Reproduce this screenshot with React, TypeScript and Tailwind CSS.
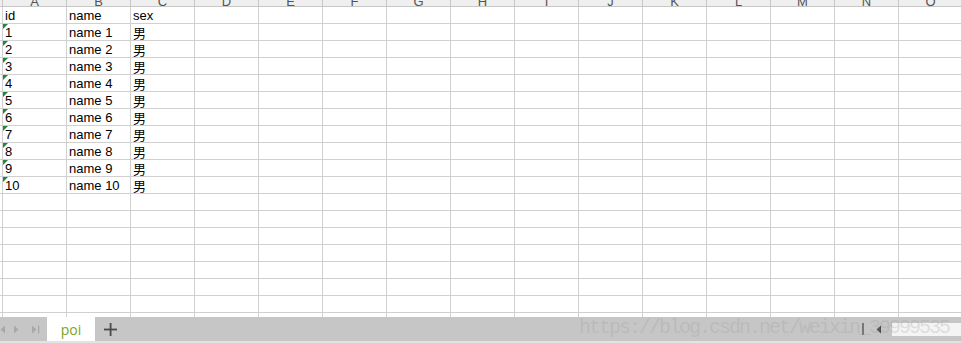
import React from "react";

const COLS = ["A", "B", "C", "D", "E", "F", "G", "H", "I", "J", "K", "L", "M", "N", "O"];

const DATA: string[][] = [
  ["id", "name", "sex"],
  ...Array.from({ length: 10 }, (_, i) => [String(i + 1), `name ${i + 1}`, "男"]),
];

const ROWS = 19;

function Cell({ text, flag, cjk }: { text?: string; flag?: boolean; cjk?: boolean }) {
  return (
    <div className="relative h-[17px] w-[64px] shrink-0 overflow-hidden border-b border-r border-[#d0d0d0] bg-white">
      {flag && (
        <span className="absolute left-0 top-0 h-0 w-0 border-r-[5px] border-t-[5px] border-r-transparent border-t-[#1d8a3a]" />
      )}
      {text && (
        <span
          className={`block pl-[2px] pt-[1px] text-[13px] leading-[15px] text-black ${
            cjk ? "font-['Noto_Sans_CJK_SC',sans-serif]" : ""
          }`}
        >
          {text}
        </span>
      )}
    </div>
  );
}

export default function App() {
  return (
    <div className="relative h-[343px] w-[961px] overflow-hidden bg-white font-['Liberation_Sans',Arial,sans-serif]">
      {/* Grid */}
      <div className="h-[317px] overflow-hidden">
        {/* Column headers (mostly scrolled out) */}
        <div className="flex">
          <div className="h-[7px] w-[3px] shrink-0 border-b border-r border-[#c8c8c8] bg-[#efefef]" />
          {COLS.map((c) => (
            <div
              key={c}
              className="flex h-[7px] w-[64px] shrink-0 items-end justify-center overflow-hidden border-b border-r border-[#c8c8c8] bg-[#efefef]"
            >
              <span className="translate-y-[2px] text-[13px] leading-none text-[#555]">{c}</span>
            </div>
          ))}
        </div>

        {Array.from({ length: ROWS }, (_, r) => (
          <div key={r} className="flex">
            <div className="h-[17px] w-[3px] shrink-0 border-b border-r border-[#d0d0d0] bg-white" />
            {COLS.map((c, ci) => {
              const row = DATA[r];
              const text = row && ci < 3 ? row[ci] : undefined;
              return (
                <Cell
                  key={c}
                  text={text}
                  flag={r > 0 && r < DATA.length && ci === 0}
                  cjk={ci === 2 && r > 0}
                />
              );
            })}
          </div>
        ))}
      </div>

      {/* Sheet tab bar */}
      <div className="flex h-[26px] items-stretch border-b-2 border-[#e3e3e3] bg-[#c6c6c6]">
        <div className="flex w-[47px] items-center gap-[7px]">
          <svg width="6" height="9" viewBox="0 0 6 9">
            <path d="M5 0.5 L0.5 4.5 L5 8.5 Z" fill="#a8a8a8" />
          </svg>
          <svg width="6" height="9" viewBox="0 0 6 9">
            <path d="M1 0.5 L5.5 4.5 L1 8.5 Z" fill="#a8a8a8" />
          </svg>
          <svg width="9" height="9" viewBox="0 0 9 9" className="ml-[5px]">
            <path d="M1 0.5 L5.5 4.5 L1 8.5 Z" fill="#a8a8a8" />
            <rect x="7" y="0.5" width="1.3" height="8" fill="#a8a8a8" />
          </svg>
        </div>
        <div className="flex w-[48px] items-center justify-center bg-white pt-[1px] text-[14px] text-[#7aa51e] font-['Open_Sans',sans-serif]">
          poi
        </div>
        <div className="flex w-[30px] items-center justify-center">
          <svg width="13" height="13" viewBox="0 0 13 13">
            <rect x="5.7" y="0" width="1.8" height="13" fill="#4a4a4a" />
            <rect x="0" y="5.6" width="13" height="1.8" fill="#4a4a4a" />
          </svg>
        </div>
        <div className="flex-1" />
        <div className="flex items-center">
          <div className="mr-[12px] h-[12px] w-[2px] bg-[#777]" />
          <svg width="6" height="9" viewBox="0 0 6 9" className="mr-[10px]">
            <path d="M5 0.5 L0.5 4.5 L5 8.5 Z" fill="#4a4a4a" />
          </svg>
          <div className="h-[13px] w-[69px] bg-[#f4f4f4]" />
        </div>
      </div>

      {/* Watermark */}
      <div className="pointer-events-none absolute left-[579px] top-[313px] whitespace-nowrap text-[20px] tracking-[-2px] text-[rgba(150,150,150,0.25)] font-['Liberation_Mono',monospace]">
        https://blog.csdn.net/weixin_39999535
      </div>
    </div>
  );
}
